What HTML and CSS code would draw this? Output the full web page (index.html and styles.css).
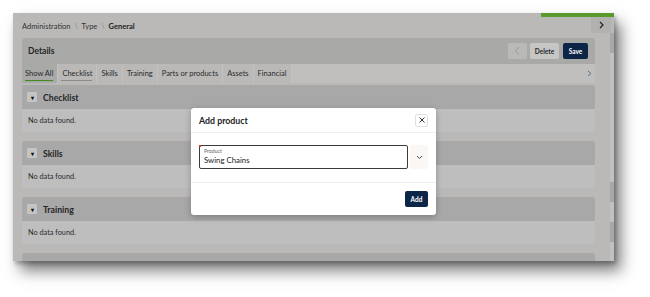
FILE: index.html
```html
<!DOCTYPE html>
<html>
<head>
<meta charset="utf-8">
<link rel="stylesheet" href="styles.css">
</head>
<body>
<div class="window">
  <div class="progress"></div>
  <div class="scroll"><span class="thumb t0"></span><span class="thumb t1"></span><span class="thumb t2"></span></div>
  <div class="topbar">
    <div class="crumbs">Administration <span class="sep">\</span> Type <span class="sep">\</span> <b>General</b></div>
    <div class="railbtn"><svg width="7" height="8" viewBox="0 0 7 8"><path d="M2 1 L5 4 L2 7" fill="none" stroke="#222" stroke-width="1.2"/></svg></div>
  </div>
  <div class="panel">
    <div class="panel-head">
      <div class="panel-title">Details</div>
      <div class="actions">
        <div class="btn back"><svg width="7" height="10" viewBox="0 0 7 10"><path d="M5 1 L1.5 5 L5 9" fill="none" stroke="#9a9a9a" stroke-width="1"/></svg></div>
        <div class="btn del">Delete</div>
        <div class="btn save">Save</div>
      </div>
    </div>
    <div class="tabs">
      <div class="tab active">Show All</div>
      <div class="tab under">Checklist</div>
      <div class="tab">Skills</div>
      <div class="tab">Training</div>
      <div class="tab">Parts or products</div>
      <div class="tab">Assets</div>
      <div class="tab">Financial</div>
      <div class="tab-rest"><svg width="5" height="7" viewBox="0 0 5 7"><path d="M1 1 L4 3.5 L1 6" fill="none" stroke="#56718a" stroke-width="1"/></svg></div>
    </div>
    <div class="section">
      <div class="sec-head"><span class="tog">▾</span>Checklist</div>
      <div class="sec-body">No data found.</div>
    </div>
    <div class="section">
      <div class="sec-head"><span class="tog">▾</span>Skills</div>
      <div class="sec-body">No data found.</div>
    </div>
    <div class="section">
      <div class="sec-head"><span class="tog">▾</span>Training</div>
      <div class="sec-body">No data found.</div>
    </div>
    <div class="section">
      <div class="sec-head"></div>
    </div>
  </div>

  <div class="dialog">
    <div class="dlg-head">
      <div class="dlg-title">Add product</div>
      <div class="close"><svg width="8" height="8" viewBox="0 0 8 8"><path d="M1.5 1.5 L6.5 6.5 M6.5 1.5 L1.5 6.5" stroke="#333" stroke-width="1"/></svg></div>
    </div>
    <div class="dlg-body">
      <div class="field">
        <div class="input">
          <span class="req"></span>
          <div class="lbl">Product</div>
          <div class="val">Swing Chains</div>
        </div>
        <div class="drop"><svg width="7" height="5" viewBox="0 0 7 5"><path d="M1 1 L3.5 3.5 L6 1" fill="none" stroke="#555" stroke-width="1"/></svg></div>
      </div>
    </div>
    <div class="dlg-foot">
      <div class="btn add">Add</div>
    </div>
  </div>
</div>
</body>
</html>
```
FILE: styles.css
```css
* { box-sizing: border-box; }
html, body { margin: 0; padding: 0; background: #ffffff; }
body {
  font-family: Lato, "Noto Sans", sans-serif;
  color: #1e1e1e;
  width: 650px;
  height: 297px;
  overflow: hidden;
}
.window {
  position: relative;
  margin: 13px 0 0 13px;
  width: 601px;
  height: 248px;
  background: #bab9b7;
  box-shadow: 7px 10px 14px rgba(0,0,0,0.5), 2px 3px 4px rgba(0,0,0,0.25);
  overflow: hidden;
  padding-left: 9px;
}
.progress {
  position: absolute;
  top: 0; right: 0;
  width: 73px; height: 4px;
  background: #5a9a2c;
}
.scroll {
  position: absolute;
  top: 20px; right: 0;
  width: 4px; bottom: 0;
  background: #c2c1bf;
}
.thumb { position: absolute; left: 0; width: 4px; background: #a9a8a6; }
.t0 { top: 0; height: 20px; }
.t1 { top: 149px; height: 20px; }
.t2 { top: 189px; height: 20px; }
.topbar {
  height: 25px;
  display: flex;
  align-items: center;
  justify-content: space-between;
  padding-right: 3px;
}
.crumbs { font-size: 7.5px; color: #333; padding-top: 1px; }
.crumbs b { font-weight: 700; color: #222; }
.sep { color: #8a8a8a; margin: 0 2px; }
.railbtn {
  width: 20px; height: 16px;
  margin-top: -2px;
  background: #b2b1af;
  display: flex; align-items: center; justify-content: center;
}
.panel { width: 573px; }
.panel-head {
  height: 26px;
  background: #a9a9a8;
  border-radius: 3px 3px 0 0;
  display: flex;
  align-items: center;
  justify-content: space-between;
  padding: 0 7px 0 6px;
}
.panel-title { font-size: 8.5px; font-weight: 700; color: #252525; }
.actions { display: flex; gap: 3px; align-items: center; }
.btn {
  height: 16px;
  border-radius: 2px;
  display: flex; align-items: center; justify-content: center;
  font-size: 6.5px; font-weight: 700;
}
.back { width: 19px; background: #b9b9b8; }
.del { width: 29px; background: #c6c6c5; color: #2a2a2a; margin-right: 1px; }
.save { width: 25px; background: #0d2647; color: #fff; }
.tabs {
  height: 19px;
  display: flex;
  background: #bab9b8;
}
.tab {
  font-size: 7.5px;
  color: #2b2b2b;
  padding: 0 4px;
  display: flex; align-items: center;
  position: relative;
  border-right: 1px solid #c3c2c1;
}
.tab.active { background: #a9a9a8; padding: 0 4px 0 3px; }
.tab.active::after, .tab.under::after {
  content: "";
  position: absolute;
  left: 3px; right: 4px; bottom: 2px;
  height: 1.5px;
}
.tab.active::after { background: #3f8a22; }
.tab.under::after { background: #8d8b89; }
.tab-rest {
  flex: 1;
  background: #c0bfbe;
  display: flex; align-items: center; justify-content: flex-end;
  padding-right: 3px;
}
.section {
  margin-top: 2px;
  border-radius: 3px;
  overflow: hidden;
}
.section + .section { margin-top: 9px; }
.sec-head {
  height: 24px;
  background: #a8a8a8;
  display: flex; align-items: center;
  padding-left: 5px;
  font-size: 8.7px; font-weight: 700; color: #262626;
}
.tog {
  width: 10px; height: 10px;
  background: #c4c4c4;
  border-radius: 1px;
  display: inline-flex; align-items: center; justify-content: center;
  font-size: 6px; color: #111;
  margin-right: 6px;
}
.sec-body {
  height: 23px;
  background: #bebebe;
  display: flex; align-items: center;
  padding-left: 6px;
  font-size: 7.3px; color: #2a2a2a;
}
.dialog {
  position: absolute;
  left: 178px; top: 95px;
  width: 245px; height: 107px;
  background: #ffffff;
  border-radius: 3px;
  box-shadow: 0 2px 6px rgba(0,0,0,0.25);
  display: flex; flex-direction: column;
}
.dlg-head {
  height: 25px;
  border-bottom: 1px solid #f1efee;
  display: flex; align-items: center; justify-content: space-between;
  padding: 0 8px;
}
.dlg-title { font-size: 8.8px; font-weight: 700; color: #222; }
.close {
  width: 13px; height: 13px;
  border: 1px solid #e2e0df;
  border-radius: 2px;
  display: flex; align-items: center; justify-content: center;
}
.dlg-body {
  height: 50px;
  border-bottom: 1px solid #f1efee;
  padding: 12px 8px 0 8px;
}
.field { display: flex; gap: 2px; }
.input {
  position: relative;
  width: 210px; height: 24px;
  border: 1.3px solid #3b3b3b;
  border-radius: 2px;
  padding: 2px 4px;
}
.req {
  position: absolute; left: -1px; top: -1px;
  width: 2px; height: 2px;
  background: #d0392b;
}
.lbl { font-size: 5.2px; color: #666; line-height: 6px; }
.val { font-size: 7.8px; color: #1c1c1c; line-height: 11px; margin-top: 1px; }
.drop {
  width: 18px; height: 24px;
  background: #fbf7f5;
  border-radius: 2px;
  display: flex; align-items: center; justify-content: center;
}
.dlg-foot {
  flex: 1;
  display: flex; align-items: center; justify-content: flex-end;
  padding-right: 8px;
}
.add { width: 23px; height: 16px; background: #0d2647; color: #fff; font-size: 6.5px; }
```
